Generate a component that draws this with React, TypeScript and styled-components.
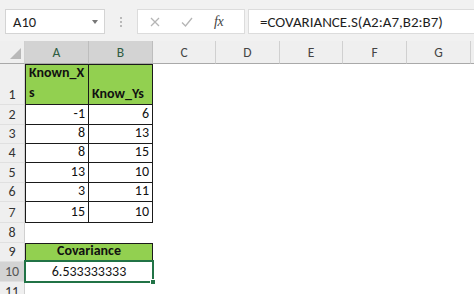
import React from "react";
import styled, { createGlobalStyle, css } from "styled-components";

const Global = createGlobalStyle`
  html, body { margin: 0; padding: 0; background: #ffffff; }
  body { font-family: Carlito, Lato, "Open Sans", sans-serif; overflow: hidden; }
  * { box-sizing: border-box; }
`;

const Page = styled.div`
  width: 474px;
  height: 294px;
  overflow: hidden;
  background: #ffffff;
  display: flex;
  flex-direction: column;
`;

const Toolbar = styled.div`
  height: 41px;
  flex: none;
  background: #f1f1f1;
  display: flex;
  align-items: flex-start;
  padding-top: 9px;
  padding-left: 5px;
`;

const NameBox = styled.div`
  width: 100px;
  height: 25px;
  background: #ffffff;
  border: 1px solid #d4d4d4;
  display: flex;
  align-items: center;
  justify-content: space-between;
  padding: 0 6px 0 7px;
  font-size: 14.5px;
  color: #1e1e1e;
`;

const Caret = styled.span`
  width: 0;
  height: 0;
  border-left: 3.5px solid transparent;
  border-right: 3.5px solid transparent;
  border-top: 4px solid #777777;
`;

const Grip = styled.div`
  width: 32px;
  height: 25px;
  display: flex;
  flex-direction: column;
  align-items: center;
  justify-content: center;
  gap: 2px;
  & > i {
    width: 2px;
    height: 2px;
    background: #b9b9b9;
    display: block;
  }
`;

const FxBox = styled.div`
  width: 108px;
  height: 25px;
  background: #ffffff;
  border: 1px solid #dcdcdc;
  display: flex;
  align-items: center;
  padding-left: 12px;
  gap: 21px;
`;

const Fx = styled.span`
  font-family: "Liberation Serif", serif;
  font-style: italic;
  font-size: 14px;
  color: #444444;
  letter-spacing: -0.5px;
`;

const FormulaInput = styled.div`
  flex: 1;
  margin-left: 3px;
  height: 25px;
  background: #ffffff;
  border: 1px solid #dcdcdc;
  border-right: none;
  display: flex;
  align-items: center;
  padding-left: 11px;
  font-size: 15px;
  color: #1e1e1e;
  white-space: nowrap;
`;

const Sheet = styled.div`
  flex: 1;
  display: flex;
  flex-direction: column;
`;

const Row = styled.div<{ $h: number }>`
  display: flex;
  height: ${(p) => p.$h}px;
  flex: none;
`;

const Corner = styled.div`
  width: 25px;
  flex: none;
  background: #efefef;
  border-bottom: 1px solid #a9a9a9;
  border-right: 1px solid #d0d0d0;
  display: flex;
  align-items: flex-end;
  justify-content: flex-end;
  padding: 0 3px 4px 0;
`;

const ColHead = styled.div<{ $w: number; $sel?: boolean }>`
  width: ${(p) => p.$w}px;
  flex: none;
  background: ${(p) => (p.$sel ? "#d3d3d3" : "#efefef")};
  border-right: 1px solid ${(p) => (p.$sel ? "#bdbdbd" : "#d0d0d0")};
  border-bottom: 1px solid #a9a9a9;
  display: flex;
  align-items: center;
  justify-content: center;
  font-size: 13.5px;
  color: ${(p) => (p.$sel ? "#2f5d43" : "#444444")};
  padding-top: 1px;
`;

const RowHead = styled.div<{ $sel?: boolean }>`
  width: 25px;
  flex: none;
  background: ${(p) => (p.$sel ? "#d3d3d3" : "#efefef")};
  border-right: 1px solid #d0d0d0;
  border-bottom: 1px solid #e0e0e0;
  display: flex;
  align-items: flex-end;
  justify-content: center;
  padding-bottom: 1px;
  font-size: 14px;
  color: ${(p) => (p.$sel ? "#555555" : "#333333")};
`;

const Cell = styled.div<{
  $w: number;
  $fill?: boolean;
  $box?: boolean;
  $left?: boolean;
  $top?: boolean;
  $align?: "left" | "right" | "center";
  $bold?: boolean;
}>`
  width: ${(p) => p.$w}px;
  flex: none;
  position: relative;
  background: ${(p) => (p.$fill ? "#92d050" : "#ffffff")};
  font-size: 14px;
  font-weight: ${(p) => (p.$bold ? 700 : 400)};
  color: #111111;
  display: flex;
  align-items: flex-end;
  justify-content: ${(p) =>
    p.$align === "right" ? "flex-end" : p.$align === "center" ? "center" : "flex-start"};
  padding: 0 3px 1px 3px;
  line-height: 18px;
  ${(p) =>
    p.$box &&
    css`
      border-right: 1px solid #1a1a1a;
      border-bottom: 1px solid #1a1a1a;
    `}
  ${(p) => p.$box && p.$left && css`border-left: 1px solid #1a1a1a;`}
  ${(p) => p.$box && p.$top && css`border-top: 1px solid #1a1a1a;`}
`;

const WrapText = styled.span`
  width: 100%;
  word-break: break-all;
  text-align: left;
  line-height: 20px;
`;

const Selection = styled.div`
  position: absolute;
  z-index: 3;
  left: -1px;
  top: -2px;
  right: -1px;
  bottom: -1px;
  border: 2px solid #217346;
  pointer-events: none;
`;

const Handle = styled.div`
  position: absolute;
  right: -4px;
  bottom: -4px;
  width: 6px;
  height: 6px;
  background: #217346;
  border: 1px solid #ffffff;
`;

const colWidths = [64, 64, 63, 64, 63, 64, 64, 20];
const letters = ["A", "B", "C", "D", "E", "F", "G", ""];

const data: [string, string][] = [
  ["-1", "6"],
  ["8", "13"],
  ["8", "15"],
  ["13", "10"],
  ["3", "11"],
  ["15", "10"],
];

const dataHeights = [20, 19, 19, 20, 19, 21];

function Blank({ from }: { from: number }) {
  return (
    <>
      {colWidths.slice(from).map((w, i) => (
        <Cell key={i} $w={w} />
      ))}
    </>
  );
}

export default function App() {
  return (
    <Page>
      <Global />
      <Toolbar>
        <NameBox>
          <span>A10</span>
          <Caret />
        </NameBox>
        <Grip>
          <i />
          <i />
          <i />
        </Grip>
        <FxBox>
          <svg width="10" height="10" viewBox="0 0 10 10">
            <path d="M1 1 L9 9 M9 1 L1 9" stroke="#b5b5b5" strokeWidth="1.3" />
          </svg>
          <svg width="12" height="10" viewBox="0 0 12 10">
            <path d="M1 5.5 L4.5 9 L11 1" stroke="#b5b5b5" strokeWidth="1.3" fill="none" />
          </svg>
          <Fx>fx</Fx>
        </FxBox>
        <FormulaInput>=COVARIANCE.S(A2:A7,B2:B7)</FormulaInput>
      </Toolbar>
      <Sheet>
        <Row $h={23}>
          <Corner>
            <svg width="11" height="11" viewBox="0 0 11 11">
              <path d="M11 0 L11 11 L0 11 Z" fill="#b8b8b8" />
            </svg>
          </Corner>
          {colWidths.map((w, i) => (
            <ColHead key={i} $w={w} $sel={i < 2}>
              {letters[i]}
            </ColHead>
          ))}
        </Row>
        <Row $h={41}>
          <RowHead>1</RowHead>
          <Cell $w={64} $fill $box $left $top $bold>
            <WrapText>Known_Xs</WrapText>
          </Cell>
          <Cell $w={64} $fill $box $top $bold>
            Know_Ys
          </Cell>
          <Blank from={2} />
        </Row>
        {data.map(([a, b], i) => (
          <Row key={i} $h={dataHeights[i]}>
            <RowHead>{i + 2}</RowHead>
            <Cell $w={64} $box $left $align="right">
              {a}
            </Cell>
            <Cell $w={64} $box $align="right">
              {b}
            </Cell>
            <Blank from={2} />
          </Row>
        ))}
        <Row $h={20}>
          <RowHead>8</RowHead>
          <Blank from={0} />
        </Row>
        <Row $h={19}>
          <RowHead>9</RowHead>
          <Cell $w={128} $fill $box $left $top $bold $align="center">
            Covariance
          </Cell>
          <Blank from={2} />
        </Row>
        <Row $h={20}>
          <RowHead $sel>10</RowHead>
          <Cell $w={128} $align="center">
            6.533333333
            <Selection>
              <Handle />
            </Selection>
          </Cell>
          <Blank from={2} />
        </Row>
        <Row $h={20}>
          <RowHead>11</RowHead>
          <Blank from={0} />
        </Row>
      </Sheet>
    </Page>
  );
}
